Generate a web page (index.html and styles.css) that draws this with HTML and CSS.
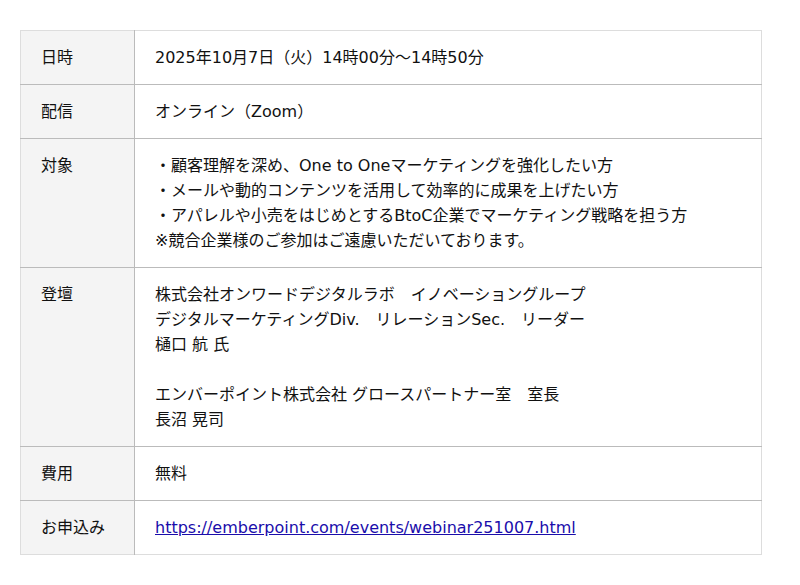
FILE: index.html
```html
<!DOCTYPE html>
<html lang="ja">
<head>
<meta charset="utf-8">
<link rel="stylesheet" href="styles.css">
</head>
<body>
<table class="info">
  <tr><th>日時</th><td>2025年10月7日（火）14時00分～14時50分</td></tr>
  <tr><th>配信</th><td>オンライン（Zoom）</td></tr>
  <tr><th>対象</th><td>・顧客理解を深め、One to Oneマーケティングを強化したい方<br>・メールや動的コンテンツを活用して効率的に成果を上げたい方<br>・アパレルや小売をはじめとするBtoC企業でマーケティング戦略を担う方<br>※競合企業様のご参加はご遠慮いただいております。</td></tr>
  <tr><th>登壇</th><td>株式会社オンワードデジタルラボ　イノベーショングループ<br>デジタルマーケティングDiv.　リレーションSec.　リーダー<br>樋口 航 氏<br><br>エンバーポイント株式会社 グロースパートナー室　室長<br>長沼 晃司</td></tr>
  <tr><th>費用</th><td>無料</td></tr>
  <tr><th>お申込み</th><td><a href="#">https://emberpoint.com/events/webinar251007.html</a></td></tr>
</table>
</body>
</html>
```
FILE: styles.css
```css
html, body { margin: 0; padding: 0; background: #fff; }
body {
  padding: 30px 20px;
  font-family: "DejaVu Sans", "Noto Sans CJK JP", sans-serif;
  font-size: 16px;
  line-height: 25px;
  color: #111;
}
.info {
  width: 742px;
  border-collapse: collapse;
  border: 1px solid #ddd;
}
.info th, .info td {
  text-align: left;
  vertical-align: top;
  padding: 14px 20px;
  font-weight: normal;
  border-top: 1px solid #bbb;
}
.info tr:first-child th, .info tr:first-child td { border-top: 1px solid #ddd; }
.info th {
  width: 73px;
  background: #f4f4f4;
  border-right: 1px solid #bbb;
  white-space: nowrap;
}
.info a { color: #1a0dab; }
```
